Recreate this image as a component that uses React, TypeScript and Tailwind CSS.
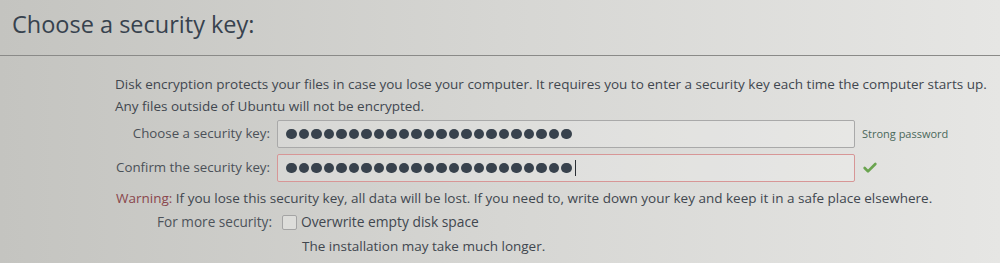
import { Check } from 'lucide-react';

const font = { fontFamily: '"Open Sans", "Noto Sans", sans-serif' };

function Dots({ count, cursor }: { count: number; cursor?: boolean }) {
  return (
    <div className="flex items-center gap-[2px] pl-[8px]">
      {Array.from({ length: count }).map((_, i) => (
        <span key={i} className="block h-[10.5px] w-[10.5px] rounded-full bg-[#38424d]" />
      ))}
      {cursor && <span className="ml-[1px] block h-[16px] w-[1px] bg-[#2a2f35]" />}
    </div>
  );
}

export default function App() {
  return (
    <div
      className="h-[263px] w-[1000px] overflow-hidden bg-gradient-to-r from-[#c4c4c0] via-[#d6d6d3] to-[#e6e6e4] text-[#41474f]"
      style={font}
    >
      {/* header */}
      <div className="flex h-[56px] items-start border-b border-[#8a8a88] pl-[12px] pt-[7px]">
        <h1 className="text-[23.5px] leading-[34px] text-[#37424e]">Choose a security key:</h1>
      </div>

      <div className="pl-[115px] pt-[17px] text-[13.5px]">
        <p className="leading-[22px]">
          Disk encryption protects your files in case you lose your computer. It requires you to enter a security key each time the computer starts up.
          <br />
          Any files outside of Ubuntu will not be encrypted.
        </p>

        <div className="mt-[3px] grid grid-cols-[155px_578px_auto] items-center gap-x-[7px] gap-y-[6px]">
          <span className="text-right text-[13.3px] text-[#4b5158]">Choose a security key:</span>
          <div className="flex h-[28px] items-center rounded-[2px] border border-[#a9a9a9] bg-white/20">
            <Dots count={23} />
          </div>
          <span className="text-[11px] text-[#4a685a]">Strong password</span>

          <span className="text-right text-[13.3px] text-[#4b5158]">Confirm the security key:</span>
          <div className="flex h-[28px] items-center rounded-[2px] border border-[#d79696] bg-white/20">
            <Dots count={23} cursor />
          </div>
          <Check className="h-[16px] w-[16px] text-[#6aa44f]" strokeWidth={4} />
        </div>

        <p className="mt-[5px] pl-[1px] text-[13.5px] leading-[22px]">
          <span className="text-[#8a474c]">Warning:</span> If you lose this security key, all data will be lost. If you need to, write down your key and keep it in a safe place elsewhere.
        </p>

        <div className="mt-[2px] flex items-center leading-[22px]">
          <span className="w-[157px] text-right text-[13.6px] text-[#4d535a]">For more security:</span>
          <span className="ml-[10px] block h-[15px] w-[15px] rounded-[2px] border border-[#a4a4a4] bg-white/30" />
          <span className="ml-[4px] text-[13.8px]">Overwrite empty disk space</span>
        </div>
        <p className="mt-[2px] pl-[187px] text-[13.5px] leading-[22px]">The installation may take much longer.</p>
      </div>
    </div>
  );
}
